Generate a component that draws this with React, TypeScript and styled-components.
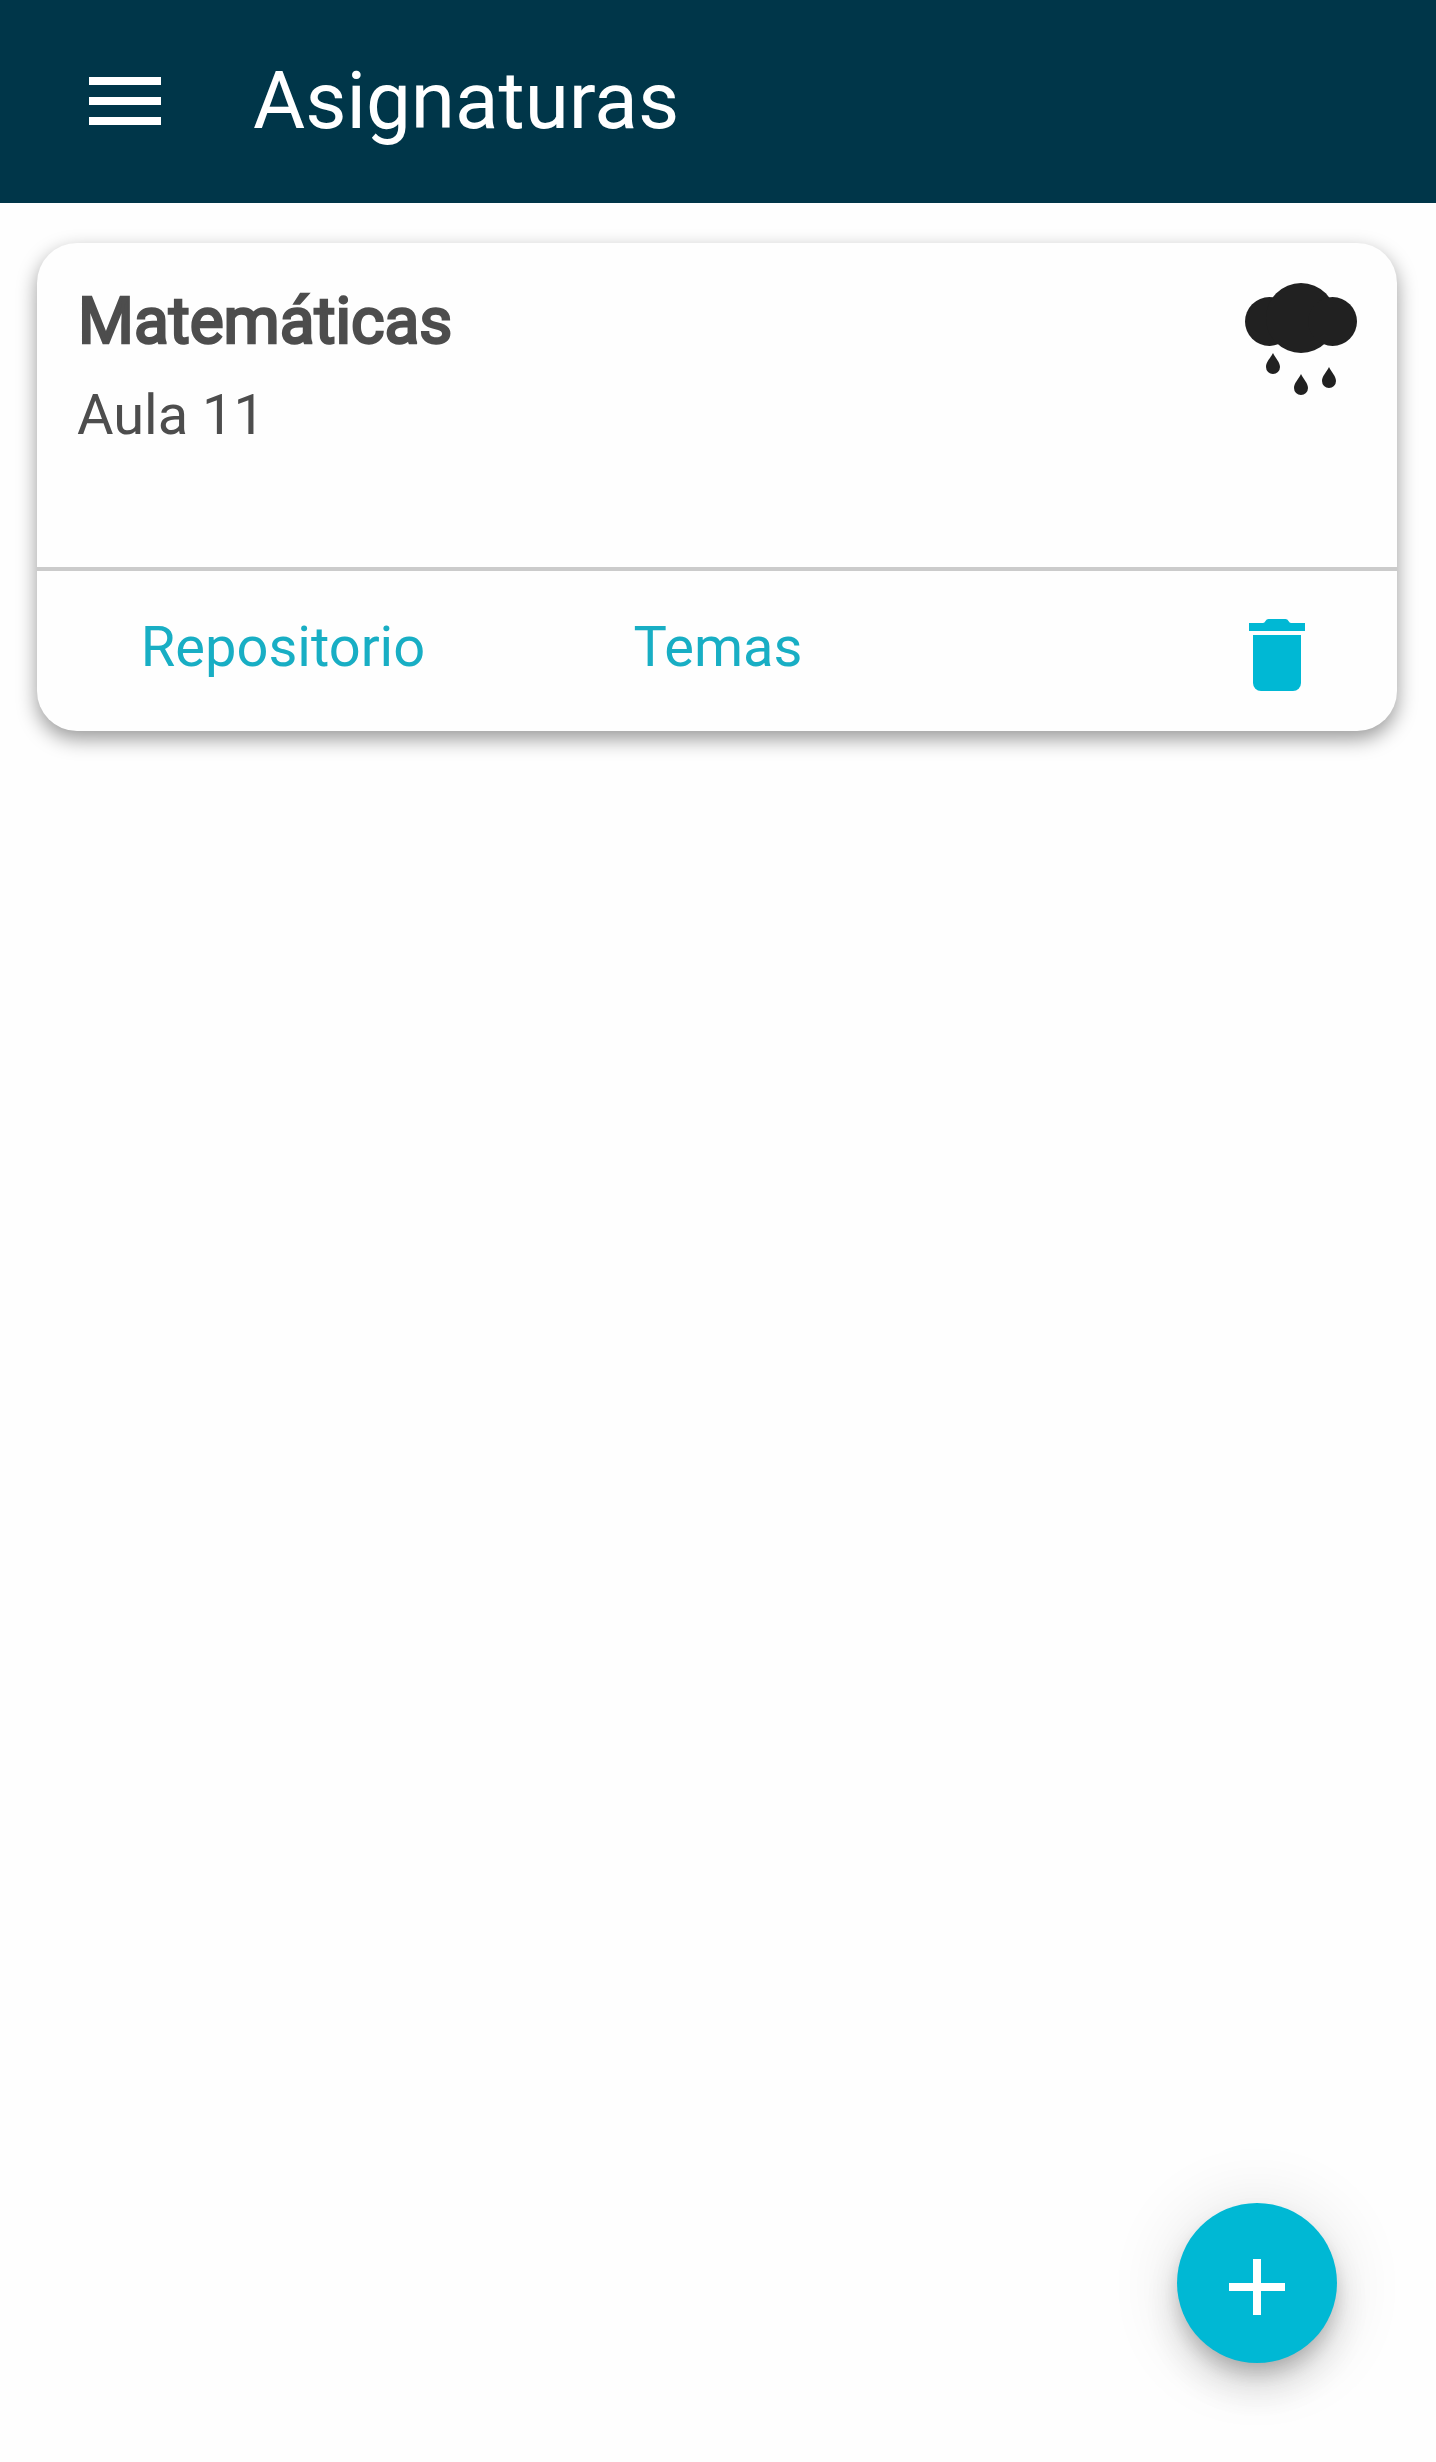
import React from "react";
import styled, { createGlobalStyle } from "styled-components";

const GlobalStyle = createGlobalStyle`
  *, *::before, *::after { box-sizing: border-box; }
  body {
    margin: 0;
    background: #fefefe;
    font-family: Roboto, "Liberation Sans", sans-serif;
    color: #4d4d4d;
  }
  button {
    border: 0;
    padding: 0;
    background: none;
    font: inherit;
    color: inherit;
    cursor: pointer;
  }
  svg { display: block; }
`;

const Screen = styled.div`
  display: flex;
  flex-direction: column;
  min-height: 100vh;
`;

const Toolbar = styled.header`
  display: flex;
  align-items: center;
  gap: 80px;
  height: 203px;
  padding: 0 0 1px 77px;
  background: #003649;
  color: #fff;
`;

const Title = styled.h1`
  margin: 0;
  font-size: 80px;
  font-weight: 400;
  line-height: 96px;
`;

const Content = styled.main`
  flex: 1;
  padding: 40px 39px 0 37px;
`;

const Card = styled.article`
  height: 488px;
  border-radius: 40px;
  background: #fefefe;
  box-shadow: 0 8px 20px rgba(0, 0, 0, 0.4);
`;

const CardHeader = styled.div`
  display: flex;
  justify-content: space-between;
  align-items: flex-start;
  height: 328px;
  padding: 40px 40px 0 40px;
  border-bottom: 4px solid #cbcbcb;
`;

const Subject = styled.h2`
  margin: 1px 0 0 1px;
  font-size: 64px;
  font-weight: 400;
  line-height: 76px;
  -webkit-text-stroke: 2.6px currentColor;
`;

const Room = styled.p`
  margin: 22px 0 0;
  font-size: 56px;
  line-height: 66px;
`;

const Actions = styled.div`
  display: grid;
  grid-template-columns: 492px 378px 1fr;
  height: 160px;
`;

const TextButton = styled.button`
  display: flex;
  justify-content: center;
  padding-top: 43px;
  font-size: 56px;
  line-height: 66px;
  color: #18aec4;
`;

const DeleteButton = styled.button`
  justify-self: end;
  align-self: start;
  margin: 36px 72px 0 0;
  color: #00b8d4;
`;

const Fab = styled.button`
  position: fixed;
  right: 99px;
  bottom: 99px;
  display: flex;
  justify-content: center;
  align-items: center;
  width: 160px;
  height: 160px;
  padding-top: 8px;
  border-radius: 50%;
  background: #00b8d4;
  color: #fff;
  box-shadow:
    0 12px 20px -4px rgba(0, 0, 0, 0.2),
    0 24px 40px 0 rgba(0, 0, 0, 0.14),
    0 4px 72px 0 rgba(0, 0, 0, 0.12);
`;

const MenuIcon = () => (
  <svg width="96" height="96" viewBox="0 0 24 24" fill="currentColor">
    <path d="M3 6h18v2H3zM3 11h18v2H3zM3 16h18v2H3z" />
  </svg>
);

const RainIcon = () => (
  <svg width="112" height="112" viewBox="0 0 112 112" fill="#212121">
    <circle cx="24.4" cy="38.5" r="24.4" />
    <circle cx="56" cy="35" r="35" />
    <circle cx="87.6" cy="38.5" r="24.4" />
    <path d="M28 70c2.6 5.4 7 9 7 14a7 7 0 0 1-14 0c0-5 4.4-8.6 7-14z" />
    <path d="M56 91c2.6 5.4 7 9 7 14a7 7 0 0 1-14 0c0-5 4.4-8.6 7-14z" />
    <path d="M84 84c2.6 5.4 7 9 7 14a7 7 0 0 1-14 0c0-5 4.4-8.6 7-14z" />
  </svg>
);

const TrashIcon = () => (
  <svg width="96" height="96" viewBox="0 0 96 96" fill="currentColor">
    <path d="M24 28h48v48a8 8 0 0 1-8 8H32a8 8 0 0 1-8-8z" />
    <path d="M20 16h14q1.500 0 2.500-2t3-2h17q2 0 3 2t2.500 2h14v8H20z" />
  </svg>
);

const PlusIcon = () => (
  <svg width="96" height="96" viewBox="0 0 24 24" fill="currentColor">
    <path d="M19 13h-6v6h-2v-6H5v-2h6V5h2v6h6z" />
  </svg>
);

export default function App() {
  return (
    <Screen>
      <GlobalStyle />
      <Toolbar>
        <button aria-label="Menú">
          <MenuIcon />
        </button>
        <Title>Asignaturas</Title>
      </Toolbar>
      <Content>
        <Card>
          <CardHeader>
            <div>
              <Subject>Matemáticas</Subject>
              <Room>Aula 11</Room>
            </div>
            <RainIcon />
          </CardHeader>
          <Actions>
            <TextButton>Repositorio</TextButton>
            <TextButton>Temas</TextButton>
            <DeleteButton aria-label="Eliminar">
              <TrashIcon />
            </DeleteButton>
          </Actions>
        </Card>
      </Content>
      <Fab aria-label="Añadir">
        <PlusIcon />
      </Fab>
    </Screen>
  );
}
